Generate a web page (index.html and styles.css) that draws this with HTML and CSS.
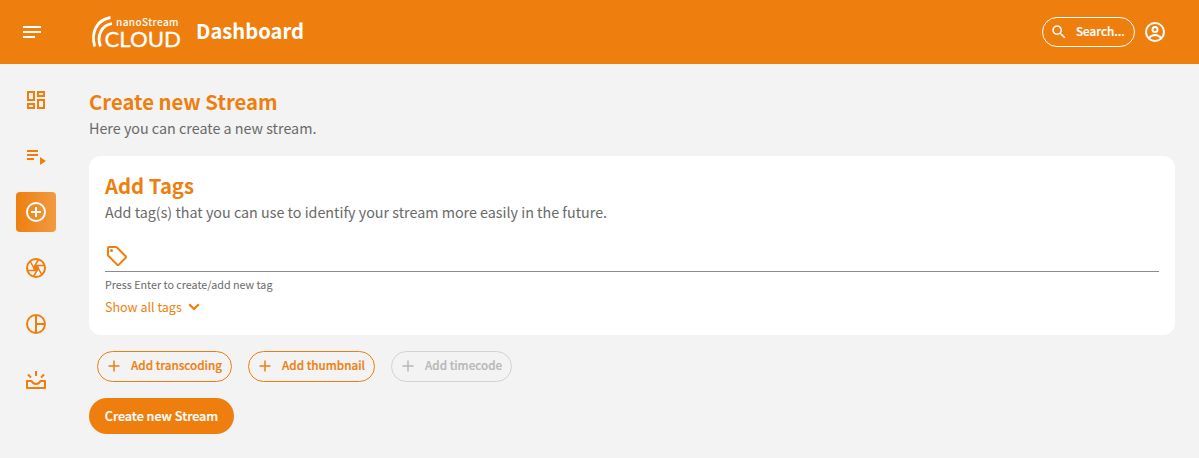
FILE: index.html
```html
<!DOCTYPE html>
<html lang="en">
<head>
<meta charset="utf-8">
<title>nanoStream Cloud Dashboard</title>
<link rel="stylesheet" href="styles.css">
</head>
<body>
<header class="topbar">
  <svg class="icon menu" viewBox="0 0 24 24"><path d="M3 18h12v-2H3v2zM3 6v2h18V6H3zm0 7h18v-2H3v2z"/></svg>
  <svg class="logo" width="92" height="34" viewBox="0 0 92 34" role="img" aria-label="nanoStream Cloud">
    <g fill="none" stroke="#fff" stroke-width="2.8"><path d="M3.800 31.500C-.5 17 6 5 19.500 2.500"/><path d="M9.500 31.500C5.500 21 10.500 10 21 8.700"/></g>
    <text class="logo-small" x="25" y="10.500" textLength="62.500">nanoStream</text>
    <text class="logo-big" x="13.500" y="31.500" textLength="76.500" lengthAdjust="spacingAndGlyphs">CLOUD</text>
  </svg>
  <h1 class="page-name">Dashboard</h1>
  <button class="search"><svg class="icon" viewBox="0 0 24 24"><path d="M15.500 14h-.79l-.28-.27A6.470 6.470 0 0 0 16 9.500 6.500 6.500 0 1 0 9.500 16c1.610 0 3.090-.59 4.230-1.570l.27.28v.79l5 4.990L20.490 19l-4.990-5zm-6 0C7.010 14 5 11.990 5 9.500S7.010 5 9.500 5 14 7.010 14 9.500 11.990 14 9.500 14z"/></svg><span>Search...</span></button>
  <svg class="icon account" viewBox="0 0 24 24" fill="none" stroke="#fff" stroke-width="2"><circle cx="12" cy="12" r="9"/><circle cx="12" cy="9.500" r="2.500"/><path d="M5.700 18.200Q8.500 15 12 15T18.300 18.200"/></svg>
</header>
<div class="layout">
  <nav class="sidebar">
    <a class="nav-item"><svg class="icon" viewBox="0 0 24 24"><path d="M19 5v2h-4V5h4M9 5v6H5V5h4m10 8v6h-4v-6h4M9 17v2H5v-2h4M21 3h-8v6h8V3zM11 3H3v10h8V3zm10 8h-8v10h8V11zm-10 4H3v6h8v-6z"/></svg></a>
    <a class="nav-item"><svg class="icon" viewBox="0 0 24 24"><path d="M3 10h11v2H3zM3 6h11v2H3zM3 14h7v2H3zM16 13v8l6-4z"/></svg></a>
    <a class="nav-item active"><svg class="icon" viewBox="0 0 24 24"><path d="M13 7h-2v4H7v2h4v4h2v-4h4v-2h-4V7zm-1-5a10 10 0 1 0 0 20 10 10 0 0 0 0-20zm0 18a8 8 0 1 1 0-16 8 8 0 0 1 0 16z"/></svg></a>
    <a class="nav-item"><svg class="icon" viewBox="0 0 24 24" fill="none" stroke="#ee7f0f"><circle cx="12" cy="12" r="9" stroke-width="2"/><path stroke-width="1.500" d="M14.500 3.500 9.500 12M21 9.500H11M18 19l-5-9M9.500 20.500l5-8.500M3 14.500h10M6 5l5 9"/><circle cx="12" cy="12" r="2.800" fill="#ee7f0f" stroke="none"/></svg></a>
    <a class="nav-item"><svg class="icon" viewBox="0 0 24 24" fill="none" stroke="#ee7f0f" stroke-width="2"><circle cx="12" cy="12" r="9"/><path d="M12 3v18M12 12h9"/></svg></a>
    <a class="nav-item"><svg class="icon" viewBox="0 0 24 24" fill="none" stroke="#ee7f0f" stroke-width="2"><path d="M12 3v5M4 6.500l3 3M20 6.500l-3 3"/><path stroke-linejoin="round" d="M3 13h4.500Q9 16 12 16t4.500-3H21v7H3z"/></svg></a>
  </nav>
  <main class="content">
    <h2 class="heading">Create new Stream</h2>
    <p class="lead">Here you can create a new stream.</p>
    <section class="card">
      <h2 class="heading">Add Tags</h2>
      <p class="lead">Add tag(s) that you can use to identify your stream more easily in the future.</p>
      <div class="tag-field"><svg class="icon" viewBox="0 0 24 24"><path d="m21.410 11.580-9-9C12.050 2.220 11.550 2 11 2H4c-1.100 0-2 .9-2 2v7c0 .55.22 1.050.59 1.420l9 9c.36.360.860.580 1.410.580s1.050-.22 1.410-.59l7-7c.37-.36.590-.86.590-1.410s-.23-1.060-.59-1.420zM13 20.010 4 11V4h7v-.01l9 9-7 7.020z"/><circle cx="6.500" cy="6.500" r="1.500"/></svg></div>
      <p class="hint">Press Enter to create/add new tag</p>
      <a class="show-all"><span>Show all tags</span><svg class="chevron" viewBox="0 0 12 8"><path d="M1.200 1.200 6 6l4.800-4.800"/></svg></a>
    </section>
    <div class="options">
      <button class="option transcoding"><svg class="plus" viewBox="0 0 12 12"><path d="M6 .5v11M.5 6h11"/></svg><span>Add transcoding</span></button>
      <button class="option thumbnail"><svg class="plus" viewBox="0 0 12 12"><path d="M6 .5v11M.5 6h11"/></svg><span>Add thumbnail</span></button>
      <button class="option timecode" disabled><svg class="plus" viewBox="0 0 12 12"><path d="M6 .5v11M.5 6h11"/></svg><span>Add timecode</span></button>
    </div>
    <button class="submit"><span>Create new Stream</span></button>
  </main>
</div>
</body>
</html>
```
FILE: styles.css
```css
* { box-sizing: border-box; }
body {
  margin: 0;
  height: 458px;
  overflow: hidden;
  background: #f3f3f3;
  color: #696969;
  font-family: "Source Sans Pro", "Noto Sans CJK SC", sans-serif;
}
h1, h2, p { margin: 0; }
button { font-family: inherit; padding: 0; white-space: nowrap; }
svg { display: block; flex: none; }
.icon { width: 24px; height: 24px; }
.topbar {
  display: flex;
  align-items: center;
  height: 64px;
  padding: 0 32px 0 20px;
  background: #ee7f0f;
  color: #fff;
  fill: #fff;
}
.logo { margin-left: 47px; overflow: visible; }
.logo-small { font-size: 10px; font-weight: 500; }
.logo-big { font: 400 22px Lato, sans-serif; stroke: #fff; stroke-width: .3px; }
.page-name { margin-left: 13px; padding-bottom: 2px; font-size: 20.200px; line-height: 28px; font-weight: 700; }
.search {
  display: flex;
  align-items: center;
  gap: 8px;
  width: 93px;
  height: 30px;
  margin-left: auto;
  padding: 0 0 1px 7px;
  border: 1px solid #fff;
  border-radius: 15px;
  background: none;
  color: #fff;
  font-size: 11.700px;
  font-weight: 500;
  -webkit-text-stroke: .2px currentColor;
}
.search .icon { width: 18px; height: 18px; margin-top: 1px; fill: #fff; }
.search span, .submit span { padding-bottom: 1px; }
.search span { padding-bottom: 3px; }
.account { margin-left: 8px; }
.layout { display: flex; }
.sidebar {
  display: flex;
  flex-direction: column;
  gap: 16px;
  width: 89px;
  padding: 16px;
  fill: #ee7f0f;
}
.nav-item {
  display: flex;
  align-items: center;
  justify-content: center;
  width: 40px;
  height: 40px;
  border-radius: 4px;
}
.active { background: linear-gradient(90deg, #ee7f0f, #f19a42); fill: #fff; }
.content { width: 1086px; padding-top: 24px; }
.heading { margin-bottom: 2px; color: #ee7f0f; font-size: 20.300px; line-height: 26px; font-weight: 700; }
.lead { font-size: 14.320px; line-height: 24px; }
.card {
  height: 179px;
  margin-top: 16px;
  padding: 16px;
  border-radius: 12px;
  background: #fff;
}
.tag-field {
  height: 48px;
  padding-top: 20px;
  border-bottom: 1px solid #8c8c8c;
  fill: #ee7f0f;
}
.hint { margin-top: 5px; font-size: 10.740px; line-height: 16px; }
.show-all {
  display: flex;
  align-items: center;
  gap: 6px;
  margin-top: 4px;
  color: #ee7f0f;
  font-size: 12.530px;
  line-height: 20px;
}
.chevron { width: 12px; height: 8px; fill: none; stroke: #ee7f0f; stroke-width: 2.200; }
.options { display: flex; gap: 16px; margin: 16px 0 0 8px; }
.option {
  display: flex;
  align-items: center;
  gap: 11px;
  height: 31px;
  padding: 0 0 1px 10px;
  border: 1px solid #ee7f0f;
  border-radius: 16px;
  background: none;
  color: #ee7f0f;
  font-size: 11.700px;
  font-weight: 500;
  -webkit-text-stroke: .2px currentColor;
}
.option span { padding-bottom: 3px; }
.option:disabled { border-color: #d2d2d2; color: #b8b8b8; }
.plus { width: 12px; height: 12px; fill: none; stroke: currentColor; stroke-width: 1.500; }
.transcoding { width: 135px; }
.thumbnail { width: 127px; }
.timecode { width: 121px; }
.submit {
  display: flex;
  align-items: center;
  justify-content: center;
  width: 145px;
  height: 36px;
  margin-top: 16px;
  border: 0;
  border-radius: 18px;
  background: #ee7f0f;
  color: #fff;
  font-size: 12.600px;
  font-weight: 500;
  -webkit-text-stroke: .2px currentColor;
}
```
